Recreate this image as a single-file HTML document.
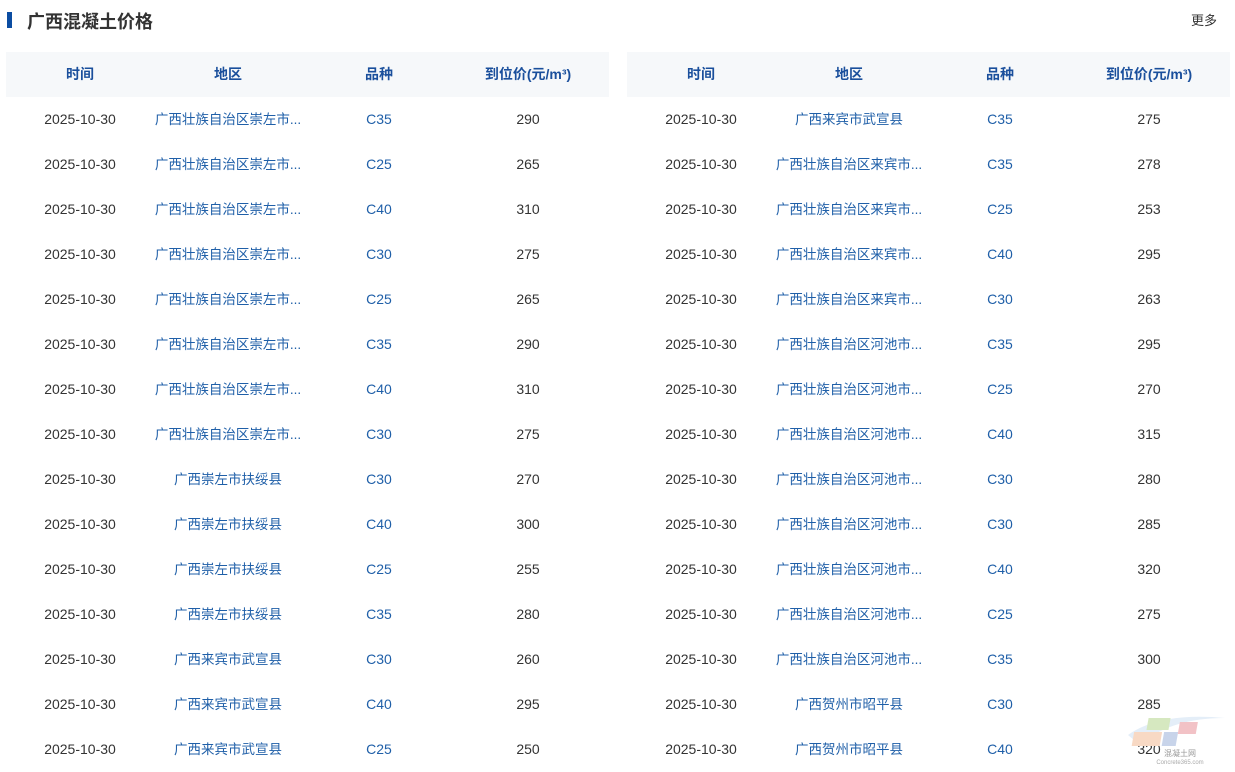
<!DOCTYPE html><html><head><meta charset="utf-8"><style>
body{margin:0;width:1235px;height:772px;background:#fff;font-family:"Liberation Sans","Noto Sans CJK SC",sans-serif;position:relative;overflow:hidden}
.bar{position:absolute;left:7px;top:12px;width:5px;height:16px;background:#0b4da2}
.title{position:absolute;left:27px;top:8px;font-size:18px;font-weight:bold;color:#333}
.more{position:absolute;left:1191px;top:10px;font-size:13px;color:#333}
.t{position:absolute;top:52px;width:603px}
.h{height:45px;background:#f6f8fa;position:relative}
.r{height:45px;position:relative}
.c{position:absolute;top:0;line-height:45px;font-size:14px;text-align:center;width:180px;white-space:nowrap}
.h .c{color:#1a4f9c;font-weight:bold;font-size:14px}
.d{color:#333}.b{color:#1f5fa8}.g{font-size:13.5px}
</style></head><body>
<div class="bar"></div><div class="title">广西混凝土价格</div><div class="more">更多</div>
<div class="t" style="left:6px" id="L"></div>
<div class="t" style="left:627px" id="R"></div>
<svg style="position:absolute;left:1120px;top:710px" width="110" height="55"><path d="M8 25 Q40 2 105 8 Q50 8 20 35 Z" fill="#e4eef8"/><rect x="18" y="22" width="28" height="14" fill="#f8d9c4" transform="skewX(-10)"/><rect x="30" y="8" width="22" height="12" fill="#d6e8c0" transform="skewX(-10)"/><rect x="48" y="22" width="14" height="14" fill="#c8d4ea" transform="skewX(-10)"/><rect x="62" y="12" width="18" height="12" fill="#f2c2c6" transform="skewX(-10)"/><text x="60" y="46" font-size="8" fill="#999" text-anchor="middle">混凝土网</text><text x="60" y="54" font-size="6" fill="#aaa" text-anchor="middle">Concrete365.com</text></svg>
<script>
const cx=[74,222,373,522];
function row(cls,vals,cc){return '<div class="'+cls+'">'+vals.map((v,i)=>'<div class="c '+(cc?cc[i]:'')+'" style="left:'+(cx[i]-90)+'px">'+v+'</div>').join('')+'</div>';}
const H=row('h',['时间','地区','品种','到位价(元/m³)']);
const A='广西壮族自治区崇左市...',F='广西崇左市扶绥县',W='广西来宾市武宣县',B='广西壮族自治区来宾市...',Hc='广西壮族自治区河池市...',Z='广西贺州市昭平县';
const L=[[A,'C35',290],[A,'C25',265],[A,'C40',310],[A,'C30',275],[A,'C25',265],[A,'C35',290],[A,'C40',310],[A,'C30',275],[F,'C30',270],[F,'C40',300],[F,'C25',255],[F,'C35',280],[W,'C30',260],[W,'C40',295],[W,'C25',250]];
const R=[[W,'C35',275],[B,'C35',278],[B,'C25',253],[B,'C40',295],[B,'C30',263],[Hc,'C35',295],[Hc,'C25',270],[Hc,'C40',315],[Hc,'C30',280],[Hc,'C30',285],[Hc,'C40',320],[Hc,'C25',275],[Hc,'C35',300],[Z,'C30',285],[Z,'C40',320]];
const cc=['d','b g','b','d'];
document.getElementById('L').innerHTML=H+L.map(r=>row('r',['2025-10-30',...r],cc)).join('');
document.getElementById('R').innerHTML=H+R.map(r=>row('r',['2025-10-30',...r],cc)).join('');
</script>
</body></html>
